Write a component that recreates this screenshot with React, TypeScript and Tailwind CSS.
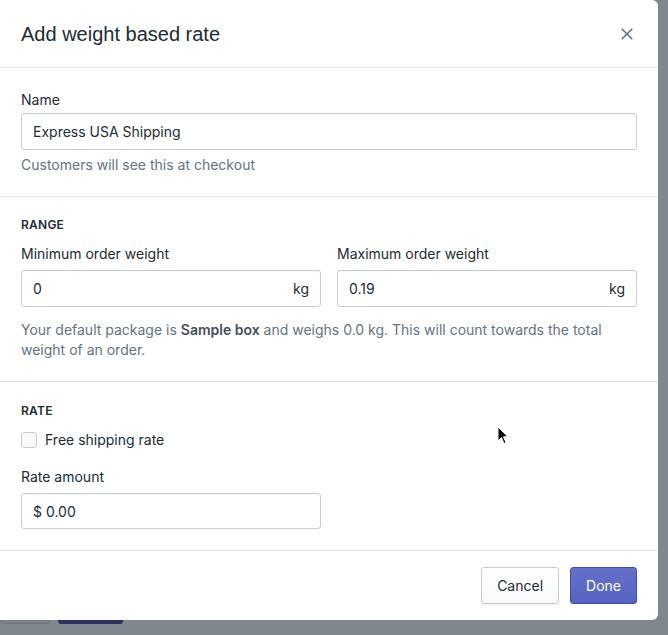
import React from "react";

const font = { fontFamily: "Inter, 'Noto Sans', sans-serif" };

function TextField({ value, suffix, h = "h-[37px]" }: { value: string; suffix?: string; h?: string }) {
  return (
    <div
      className={`flex ${h} items-center rounded-[3px] border border-[#c4cdd5] bg-white px-[11px] text-[14px] text-[#212b36] shadow-[inset_0_1px_0_0_rgba(99,115,129,0.05)]`}
    >
      <span className="flex-1">{value}</span>
      {suffix && <span className="text-[#212b36]">{suffix}</span>}
    </div>
  );
}

function Label({ children }: { children: React.ReactNode }) {
  return <div className="text-[14px] leading-5 text-[#212b36]">{children}</div>;
}

function Heading({ children }: { children: React.ReactNode }) {
  return (
    <div className="text-[12px] font-semibold uppercase leading-4 tracking-[0.02em] text-[#212b36]">
      {children}
    </div>
  );
}

export default function App() {
  return (
    <div className="relative h-[635px] w-[668px] overflow-hidden bg-[#80868d]" style={font}>
      {/* page behind the backdrop */}
      <div className="absolute left-0 top-[600px] flex gap-[8px]">
        <div className="h-[24px] w-[50px] rounded-[3px] border border-[#6f757c] bg-[#7a8087]" />
        <div className="h-[24px] w-[65px] rounded-[3px] bg-[#2c3163]" />
      </div>

      <div className="relative z-10 w-[658px] rounded-r-[6px] bg-white">
        <div className="flex h-[68px] items-center justify-between border-b border-[#dfe3e8] px-[21px]">
          <h1 className="text-[20px] leading-7 text-[#212b36]" style={{ fontFamily: "'Liberation Sans', Arial, sans-serif" }}>
            Add weight based rate
          </h1>
          <svg width="16" height="16" viewBox="0 0 20 20" className="mr-[2px] text-[#637381]">
            <path d="M4 4l12 12M16 4L4 16" stroke="currentColor" strokeWidth="2" strokeLinecap="round" />
          </svg>
        </div>

        <div className="border-b border-[#dfe3e8] px-[21px] pb-[21px] pt-[22px]">
          <Label>Name</Label>
          <div className="mt-[3px]">
            <TextField value="Express USA Shipping" />
          </div>
          <p className="mt-[5px] text-[14px] leading-5 text-[#637381]">Customers will see this at checkout</p>
        </div>

        <div className="border-b border-[#dfe3e8] px-[21px] pb-[21px] pt-[20px]">
          <Heading>Range</Heading>
          <div className="mt-[11px] grid grid-cols-2 gap-x-[16px]">
            <div>
              <Label>Minimum order weight</Label>
              <div className="mt-[6px]">
                <TextField value="0" suffix="kg" />
              </div>
            </div>
            <div>
              <Label>Maximum order weight</Label>
              <div className="mt-[6px]">
                <TextField value="0.19" suffix="kg" />
              </div>
            </div>
          </div>
          <p className="mt-[13px] text-[14px] leading-5 text-[#637381]">
            Your default package is <span className="font-semibold text-[#454f5b]">Sample box</span> and weighs 0.0
            kg. This will count towards the total weight of an order.
          </p>
        </div>

        <div className="border-b border-[#dfe3e8] px-[21px] pb-[21px] pt-[21px]">
          <Heading>Rate</Heading>
          <label className="mt-[11px] flex items-center gap-[8px]">
            <span className="h-[16px] w-[16px] rounded-[3px] border border-[#c4cdd5] bg-[#f9fafb]" />
            <span className="text-[14px] leading-5 text-[#212b36]">Free shipping rate</span>
          </label>
          <div className="mt-[17px]">
            <Label>Rate amount</Label>
            <div className="mt-[6px] w-[300px]">
              <TextField value="$ 0.00" h="h-[36px]" />
            </div>
          </div>
        </div>

        <div className="flex justify-end gap-[11px] px-[21px] pb-[16px] pt-[16px]">
          <button className="h-[37px] rounded-[3px] border border-[#c4cdd5] bg-gradient-to-b from-white to-[#f9fafb] px-[15px] text-[14px] text-[#212b36] shadow-[0_1px_0_0_rgba(22,29,37,0.05)]">
            Cancel
          </button>
          <button className="h-[37px] rounded-[3px] border border-[#3f4eae] bg-gradient-to-b from-[#6371c7] to-[#5563c1] px-[15px] text-[14px] text-white">
            Done
          </button>
        </div>
      </div>

      {/* mouse pointer */}
      <svg width="12" height="19" viewBox="0 0 12 19" className="absolute left-[497px] top-[426px] z-20">
        <path d="M1 1v14l3.5-3.5 2.5 6 2-1-2.5-5.7H11z" fill="#000" stroke="#fff" strokeWidth="1" />
      </svg>
    </div>
  );
}
